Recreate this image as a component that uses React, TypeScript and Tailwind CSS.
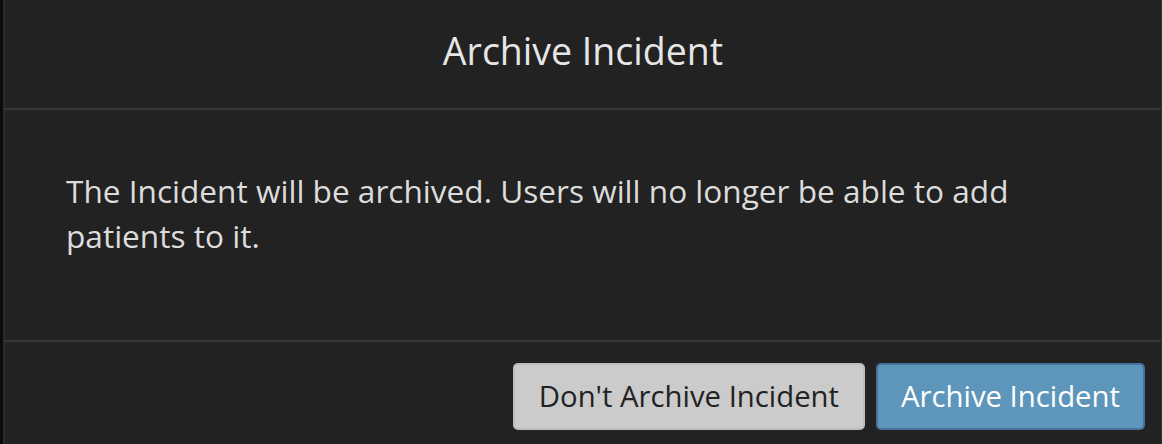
export default function App() {
  return (
    <div className="flex h-[444px] w-full overflow-hidden bg-[#0b0b0b] pl-[3px] font-['Open_Sans',sans-serif]">
      <div className="flex flex-1 flex-col border-l-2 border-r border-l-[#2b2b2b] border-r-[#2e2e2e] bg-[#222222]">
        <div className="border-b-2 border-[#383838] pt-[29px] pb-[35px] text-center text-[37.5px] leading-[44px] text-[#e6e6e6]">
          Archive Incident
        </div>
        <div className="h-[232px] border-b-2 border-[#383838] px-[61px] pt-[58px] text-[31.6px] leading-[45px] text-[#dcdcdc]">
          The Incident will be archived. Users will no longer be able to add patients to it.
        </div>
        <div className="flex justify-end gap-[11px] pt-[21px] pr-[16px]">
          <button className="flex h-[67px] items-center rounded-[5px] border-2 border-[#bdbdbd] bg-[#cbcbcb] px-[24px] text-[29.3px] text-[#222222]">
            Don't Archive Incident
          </button>
          <button className="flex h-[67px] items-center rounded-[5px] border-2 border-[#44719e] bg-[#5e96bb] px-[23px] text-[29.3px] text-white">
            Archive Incident
          </button>
        </div>
      </div>
    </div>
  );
}
